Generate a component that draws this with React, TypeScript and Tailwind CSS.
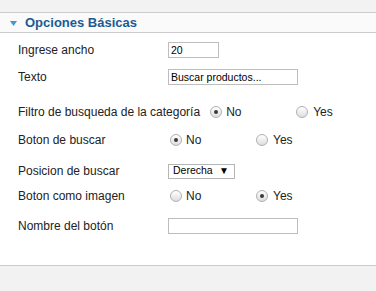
import React from "react";

function Radio({ checked }: { checked?: boolean }) {
  return (
    <span className="relative inline-block w-[12px] h-[12px] rounded-full border border-[#b0b0b0] bg-gradient-to-b from-[#ffffff] to-[#dedede] shrink-0">
      {checked && (
        <span className="absolute left-1/2 top-1/2 w-[4px] h-[4px] -translate-x-1/2 -translate-y-1/2 rounded-full bg-[#3a3a3a]" />
      )}
    </span>
  );
}

function RadioGroup({ value }: { value: "No" | "Yes" }) {
  return (
    <div className="flex items-center">
      <div className="flex items-center w-[88px] pl-[2px]">
        <Radio checked={value === "No"} />
        <span className="ml-[4px]">No</span>
      </div>
      <div className="flex items-center">
        <Radio checked={value === "Yes"} />
        <span className="ml-[5px]">Yes</span>
      </div>
    </div>
  );
}

function Row({ label, children, className = "" }: { label: string; children: React.ReactNode; className?: string }) {
  return (
    <div className={"flex items-center h-[20px] " + className}>
      <span className="min-w-[150px] whitespace-nowrap pr-[4px]">{label}</span>
      {children}
    </div>
  );
}

export default function App() {
  return (
    <div
      className="w-[376px] h-[291px] bg-[#f2f2f2] text-[12px] text-[#222]"
      style={{ fontFamily: '"Liberation Sans", Arial, sans-serif' }}
    >
      <div className="h-[12px]" />
      <div className="h-[21px] border-y border-[#cccccc] bg-[#fafafa] flex items-center pl-[10px]">
        <svg width="7" height="5" viewBox="0 0 7 5" className="mt-[2px]">
          <polygon points="0,0 7,0 3.5,5" fill="#3d9ad6" />
        </svg>
        <span className="ml-[8px] text-[13px] font-bold text-[#1c5a94]">Opciones Básicas</span>
      </div>
      <div className="bg-white h-[233px] border-b border-[#cccccc] pl-[18px] pt-[7px]">
        <Row label="Ingrese ancho">
          <div className="w-[51px] h-[16px] border border-[#bdbdbd] text-[10.5px] leading-[14px] pl-[2px] text-black">20</div>
        </Row>
        <Row label="Texto" className="mt-[7px]">
          <div className="w-[130px] h-[16px] border border-[#bdbdbd] text-[10.5px] leading-[14px] pl-[2px] text-black">Buscar productos...</div>
        </Row>
        <Row label="Filtro de busqueda de la categoría" className="mt-[15px]">
          <div className="ml-[4px]">
            <RadioGroup value="No" />
          </div>
        </Row>
        <Row label="Boton de buscar" className="mt-[8px]">
          <RadioGroup value="No" />
        </Row>
        <Row label="Posicion de buscar" className="mt-[11px]">
          <div className="w-[67px] h-[15px] border border-[#b5b5b5] flex items-center justify-between pl-[4px] pr-[5px] text-[10.5px] text-black">
            <span>Derecha</span>
            <span className="text-[10px] leading-none">▼</span>
          </div>
        </Row>
        <Row label="Boton como imagen" className="mt-[5px]">
          <RadioGroup value="Yes" />
        </Row>
        <Row label="Nombre del botón" className="mt-[10px]">
          <div className="w-[130px] h-[16px] border border-[#bdbdbd]" />
        </Row>
      </div>
    </div>
  );
}
